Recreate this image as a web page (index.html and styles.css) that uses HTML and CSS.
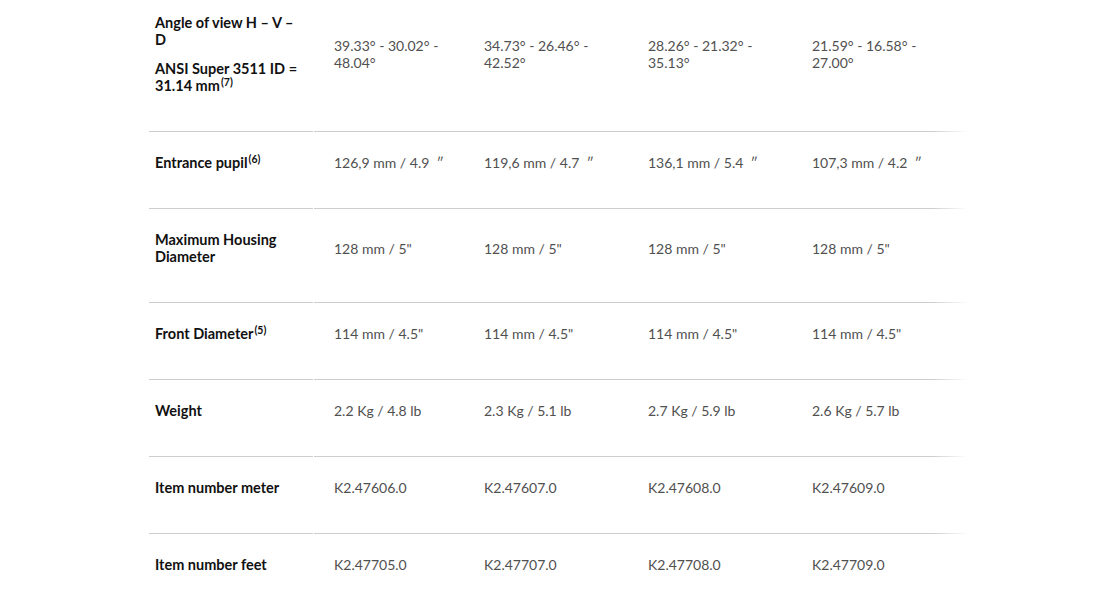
FILE: index.html
```html
<!DOCTYPE html>
<html lang="en">
<head>
<meta charset="utf-8">
<title>Lens specifications</title>
<link rel="stylesheet" href="styles.css">
</head>
<body>
<div class="specs">
  <div class="row row-first">
    <div class="label">
      <p>Angle of view H – V –<br>D</p>
      <p>ANSI Super 3511 ID =<br>31.14 mm<sup>(7)</sup></p>
    </div>
    <div class="vals">
      <div class="val">39.33° - 30.02° -<br>48.04°</div>
      <div class="val">34.73° - 26.46° -<br>42.52°</div>
      <div class="val">28.26° - 21.32° -<br>35.13°</div>
      <div class="val">21.59° - 16.58° -<br>27.00°</div>
    </div>
  </div>
  <div class="row">
    <div class="label"><p>Entrance pupil<sup>(6)</sup></p></div>
    <div class="vals">
      <div class="val">126,9 mm / 4.9&nbsp; ″</div>
      <div class="val">119,6 mm / 4.7&nbsp; ″</div>
      <div class="val">136,1 mm / 5.4&nbsp; ″</div>
      <div class="val">107,3 mm / 4.2&nbsp; ″</div>
    </div>
  </div>
  <div class="row">
    <div class="label"><p>Maximum Housing<br>Diameter</p></div>
    <div class="vals">
      <div class="val">128 mm / 5"</div>
      <div class="val">128 mm / 5"</div>
      <div class="val">128 mm / 5"</div>
      <div class="val">128 mm / 5"</div>
    </div>
  </div>
  <div class="row">
    <div class="label"><p>Front Diameter<sup>(5)</sup></p></div>
    <div class="vals">
      <div class="val">114 mm / 4.5"</div>
      <div class="val">114 mm / 4.5"</div>
      <div class="val">114 mm / 4.5"</div>
      <div class="val">114 mm / 4.5"</div>
    </div>
  </div>
  <div class="row">
    <div class="label"><p>Weight</p></div>
    <div class="vals">
      <div class="val">2.2 Kg / 4.8 lb</div>
      <div class="val">2.3 Kg / 5.1 lb</div>
      <div class="val">2.7 Kg / 5.9 lb</div>
      <div class="val">2.6 Kg / 5.7 lb</div>
    </div>
  </div>
  <div class="row">
    <div class="label"><p>Item number meter</p></div>
    <div class="vals">
      <div class="val">K2.47606.0</div>
      <div class="val">K2.47607.0</div>
      <div class="val">K2.47608.0</div>
      <div class="val">K2.47609.0</div>
    </div>
  </div>
  <div class="row row-last">
    <div class="label"><p>Item number feet</p></div>
    <div class="vals">
      <div class="val">K2.47705.0</div>
      <div class="val">K2.47707.0</div>
      <div class="val">K2.47708.0</div>
      <div class="val">K2.47709.0</div>
    </div>
  </div>
</div>
</body>
</html>
```
FILE: styles.css
```css
html, body {
  margin: 0;
  padding: 0;
  background: #ffffff;
}

body {
  font-family: Lato, "Liberation Sans", sans-serif;
  font-size: 14px;
  line-height: 17px;
}

.specs {
  margin-left: 149px;
  width: 819px;
}

.row {
  display: flex;
  align-items: stretch;
}

.label {
  width: 158px;
  flex: 0 0 auto;
  padding: 22px 0 37px 6px;
  border-bottom: 1px solid #cdcdcd;
  margin-right: 1px;
  display: flex;
  flex-direction: column;
  justify-content: center;
  font-size: 14.5px;
  font-weight: 700;
  color: #111111;
}

.label p {
  margin: 0;
}

.label p + p {
  margin-top: 12px;
}

.vals {
  flex: 1 1 auto;
  display: grid;
  grid-template-columns: 150px 164px 164px 1fr;
  padding: 22px 0 38px 0;
  background-image: linear-gradient(to right, #cdcdcd 0, #cdcdcd calc(100% - 36px), rgba(205, 205, 205, 0) 100%);
  background-repeat: no-repeat;
  background-size: 100% 1px;
  background-position: left bottom;
}

.val {
  padding-left: 20px;
  align-self: center;
  font-weight: 400;
  color: #505050;
}

.row-first .label,
.row-first .vals {
  padding-top: 14px;
}

.row-last .label {
  border-bottom-color: transparent;
}

.row-last .vals {
  background-image: none;
}

sup {
  font-size: 10.5px;
  line-height: 0;
  vertical-align: 5px;
  margin-left: 1px;
}
```
